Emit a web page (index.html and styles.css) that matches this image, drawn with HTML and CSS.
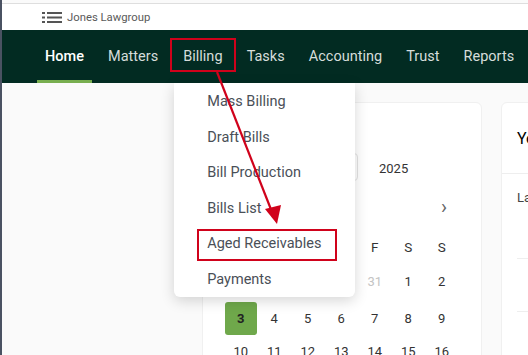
FILE: index.html
```html
<!DOCTYPE html>
<html>
<head>
<meta charset="utf-8">
<link rel="stylesheet" href="styles.css">
</head>
<body>
<div class="app">
  <header class="topbar">
    <svg class="list-icon" width="20" height="11" viewBox="0 0 20 11">
      <rect x="0" y="0" width="3" height="2" fill="#555"/>
      <rect x="5" y="0" width="15" height="2" fill="#555"/>
      <rect x="0" y="4.5" width="3" height="2" fill="#555"/>
      <rect x="5" y="4.5" width="15" height="2" fill="#555"/>
      <rect x="0" y="9" width="3" height="2" fill="#555"/>
      <rect x="5" y="9" width="15" height="2" fill="#555"/>
    </svg>
    <span class="firm">Jones Lawgroup</span>
  </header>

  <nav class="mainnav">
    <a class="nav-item active">Home</a>
    <a class="nav-item">Matters</a>
    <a class="nav-item billing">Billing
      <span class="callout callout-billing"></span>
      <div class="dropdown">
        <div class="dd-item">Mass Billing</div>
        <div class="dd-item">Draft Bills</div>
        <div class="dd-item">Bill Production</div>
        <div class="dd-item">Bills List</div>
        <div class="dd-item">Aged Receivables<span class="callout callout-aged"></span></div>
        <div class="dd-item">Payments</div>
      </div>
    </a>
    <a class="nav-item">Tasks</a>
    <a class="nav-item">Accounting</a>
    <a class="nav-item">Trust</a>
    <a class="nav-item">Reports</a>
  </nav>

  <main class="content">
    <section class="card calendar">
      <div class="cal-title">Calendar</div>
      <div class="cal-controls">
        <div class="select">February</div>
        <div class="year">2025</div>
      </div>
      <div class="cal-nav">
        <span class="chev">‹</span>
        <span class="chev">›</span>
      </div>
      <div class="cal-grid">
        <div class="dow">M</div><div class="dow">T</div><div class="dow">W</div><div class="dow">T</div><div class="dow">F</div><div class="dow">S</div><div class="dow">S</div>
        <div class="day muted">27</div><div class="day muted">28</div><div class="day muted">29</div><div class="day muted">30</div><div class="day muted">31</div><div class="day">1</div><div class="day">2</div>
        <div class="day today">3</div><div class="day">4</div><div class="day">5</div><div class="day">6</div><div class="day">7</div><div class="day">8</div><div class="day">9</div>
        <div class="day">10</div><div class="day">11</div><div class="day">12</div><div class="day">13</div><div class="day">14</div><div class="day">15</div><div class="day">16</div>
      </div>
    </section>
    <section class="card side">
      <div class="side-head">Your Activity</div>
      <div class="side-row first">Last login</div>
      <div class="side-row"></div>
      <div class="side-row"></div>
    </section>
  </main>

  <svg class="arrow" width="528" height="355" viewBox="0 0 528 355">
    <line x1="217" y1="72" x2="272" y2="212" stroke="#d0021b" stroke-width="2.2"/>
    <polygon points="277,224 265,209 281,205" fill="#d0021b"/>
  </svg>
</div>
</body>
</html>
```

FILE: styles.css
```css
* { box-sizing: border-box; }
html, body { margin: 0; padding: 0; }
body {
  font-family: Roboto, "Noto Sans", Arial, sans-serif;
  background: #fafafa;
  width: 528px;
  height: 355px;
  overflow: hidden;
}
.app {
  position: relative;
  height: 355px;
  border-left: 2px solid #4a5262;
  background: #fafafa;
  overflow: hidden;
}
.topbar {
  margin-top: 3px;
  height: 27px;
  border-top: 1px solid #dedede;
  background: #fff;
  display: flex;
  align-items: center;
  padding-left: 40px;
  gap: 5px;
}
.list-icon { display: block; margin-top: 1px; }
.firm {
  font-size: 11.3px;
  color: #5a5a5a;
}
.mainnav {
  height: 53px;
  background: #022b22;
  display: flex;
  align-items: stretch;
  padding-left: 35px;
  gap: 8.1px;
}
.nav-item {
  position: relative;
  display: flex;
  align-items: center;
  padding: 0 8px;
  font-size: 14.5px;
  color: #d6dddb;
  border-bottom: 3px solid transparent;
  padding-top: 3px;
  white-space: nowrap;
}
.nav-item.billing { margin-left: 1px; }
.nav-item.active {
  color: #fff;
  font-weight: 500;
  border-bottom-color: #78ae4f;
}
.callout {
  position: absolute;
  border: 2.5px solid #d0021b;
  pointer-events: none;
}
.callout-billing {
  left: -5px; right: -5px;
  top: 8px; bottom: 8px;
}
.dropdown {
  position: absolute;
  top: 53px;
  left: -1px;
  width: 181px;
  background: #fff;
  border-radius: 0 0 6px 6px;
  box-shadow: 0 4px 14px rgba(0,0,0,0.16);
  z-index: 5;
  padding-top: 1px;
}
.dd-item {
  position: relative;
  height: 35.5px;
  display: flex;
  align-items: center;
  padding-left: 33px;
  font-size: 14.5px;
  color: #4a4f57;
  white-space: nowrap;
}
.callout-aged {
  left: 23px; width: 140px;
  top: 3px; bottom: 1px;
}
.content {
  display: flex;
  gap: 19px;
  padding: 19px 0 0 200px;
}
.card {
  background: #fff;
  border-radius: 6px;
  border: 1px solid #f0f0f0;
  height: 300px;
}
.calendar {
  width: 280px;
  flex: none;
  padding: 14px 24px 0 21px;
  position: relative;
}
.cal-title { font-size: 16px; color: #111; height: 36px; }
.cal-controls {
  display: flex;
  align-items: center;
  height: 28px;
}
.select {
  width: 134px;
  height: 28px;
  border: 1px solid #e3e3e3;
  border-radius: 4px;
  font-size: 13px;
  padding: 6px 8px;
  color: #333;
}
.year {
  margin-left: 21px;
  font-size: 13px;
  color: #333;
  margin-top: 2px;
}
.cal-nav {
  display: flex;
  justify-content: space-between;
  height: 41px;
  align-items: center;
  padding: 0 10px 0 8px;
  margin-top: 5px;
}
.chev { font-size: 20px; color: #666; line-height: 1; }
.cal-grid {
  display: grid;
  grid-template-columns: repeat(7, 33.5px);
  grid-template-rows: 35px 35px 39px 27px;
  margin-top: 2px;
}
.dow, .day {
  display: flex;
  align-items: center;
  justify-content: center;
  font-size: 13px;
  color: #333;
}
.dow { font-size: 13.5px; }
.day.muted { color: #c4c4c4; }
.day.today {
  background: #6fa84b;
  border-radius: 3px;
  font-weight: 700;
  color: #222;
  margin: 3px 1px;
}
.side {
  width: 200px;
  flex: none;
}
.side-head {
  font-size: 16px;
  color: #000;
  height: 71px;
  display: flex;
  align-items: center;
  padding-left: 15px;
  border-bottom: 1px solid #eee;
}
.side-row {
  margin-left: 15px;
  height: 53px;
  border-bottom: 1px solid #eee;
  font-size: 13px;
  color: #444;
  padding-top: 16px;
}
.side-row.first { height: 85px; padding-top: 16px; }
.arrow {
  position: absolute;
  left: -2px;
  top: 0;
  z-index: 10;
  pointer-events: none;
}
```
